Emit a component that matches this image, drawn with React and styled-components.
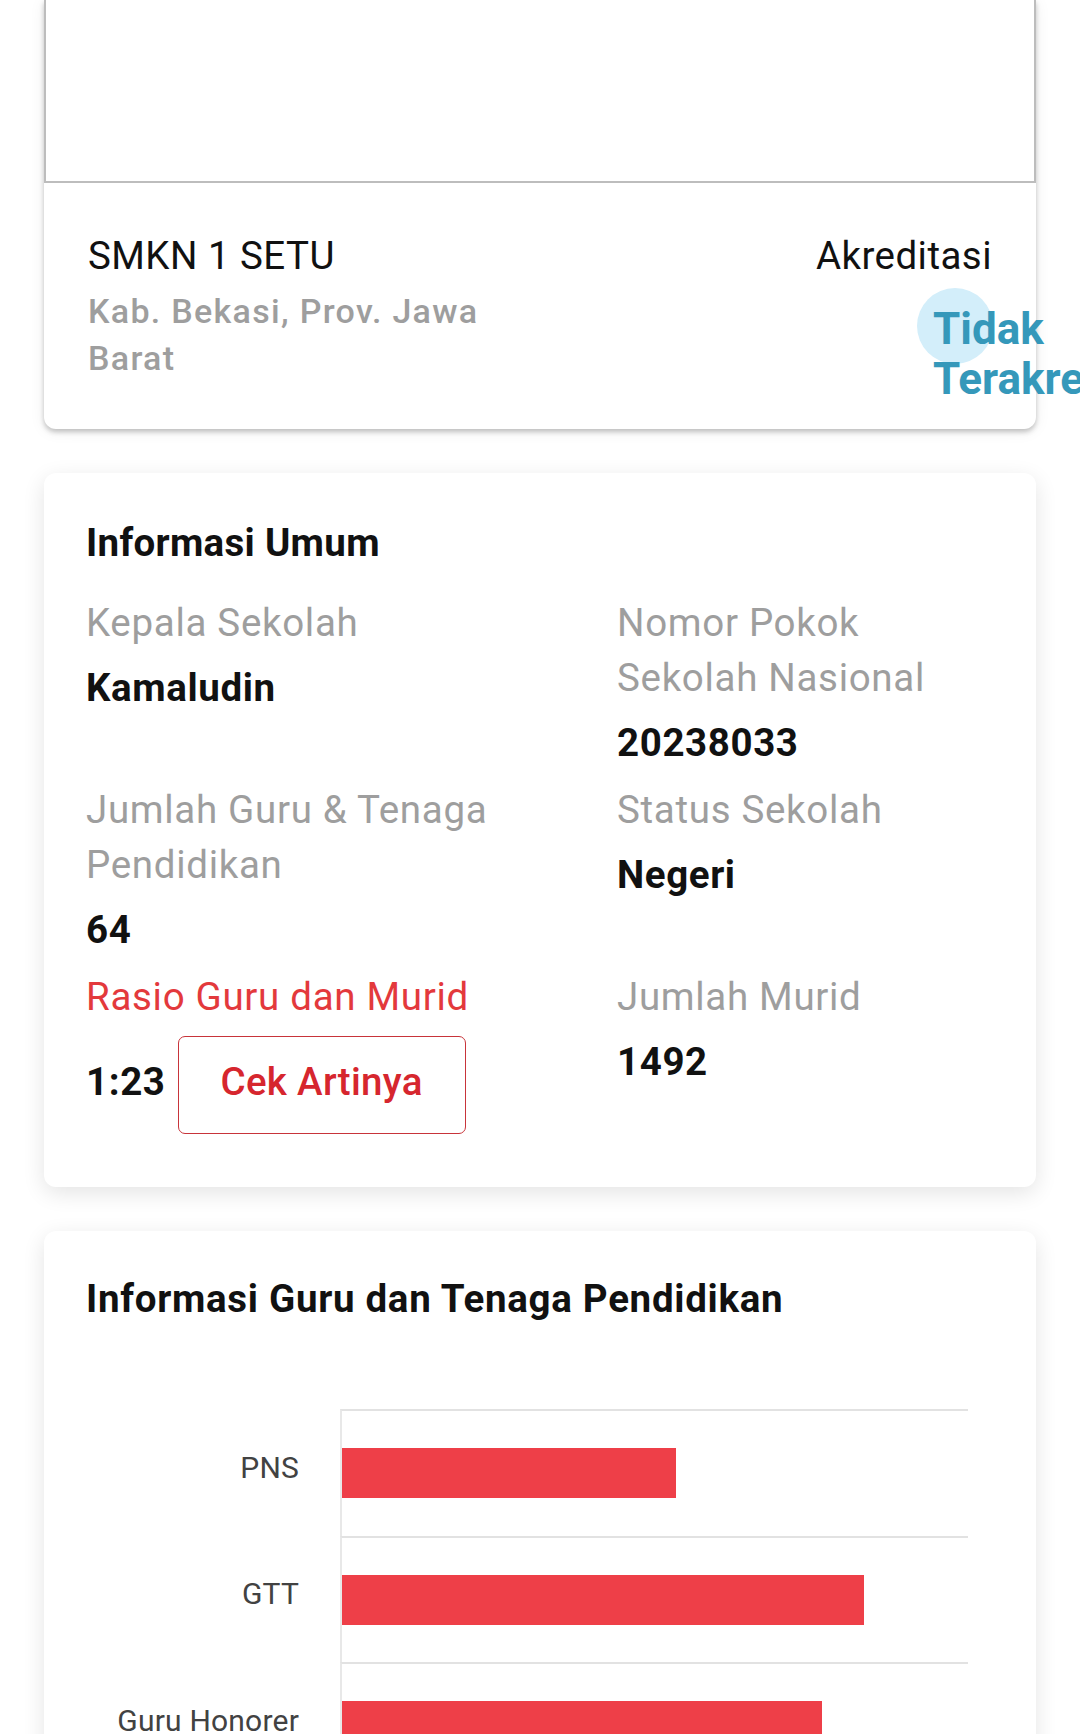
import React from "react";
import styled, { createGlobalStyle } from "styled-components";

const GlobalStyle = createGlobalStyle`
  body {
    margin: 0;
    background: #fff;
    font-family: Roboto, "Noto Sans", sans-serif;
  }
`;

const Page = styled.div`
  height: 1734px;
  overflow: hidden;
  padding: 0 44px;
  display: flex;
  flex-direction: column;
  gap: 44px;
`;

const Card = styled.section`
  flex-shrink: 0;
  background: #fff;
  border-radius: ${(p) => (p.$cutTop ? "0 0 12px 12px" : p.$cutBottom ? "12px 12px 0 0" : "12px")};
  box-shadow: ${(p) =>
    p.$raised
      ? "0 3px 5px rgba(0,0,0,0.22), 0 2px 16px rgba(0,0,0,0.07)"
      : "0 6px 22px rgba(0,0,0,0.11)"};
  padding: ${(p) => p.$pad || "42px 42px 53px"};
`;

const ImageBox = styled.div`
  height: 181px;
  border: 2px solid #bdbdbd;
  border-top: none;
`;

const Header = styled.div`
  display: flex;
  justify-content: space-between;
  padding: 45px 44px 47px;
`;

const Col = styled.div`
  flex: ${(p) => (p.$right ? "1" : "0 0 440px")};
  display: flex;
  flex-direction: column;
  align-items: ${(p) => (p.$right ? "flex-end" : "flex-start")};
`;

const SchoolName = styled.div`
  font-size: 38.5px;
  line-height: 55px;
  letter-spacing: 0.45px;
  color: #111;
`;

const Address = styled.div`
  margin-top: 5px;
  font-size: 34px;
  line-height: 47px;
  font-weight: 500;
  letter-spacing: 1.3px;
  color: #9e9e9e;
`;

const Badge = styled.div`
  position: relative;
  width: 59px;
  height: 78px;
  margin-top: 21px;
  font-size: 44px;
  line-height: 50px;
  font-weight: 700;
  color: #3598ba;
`;

const Ripple = styled.span`
  position: absolute;
  left: -16px;
  top: -16px;
  width: 76px;
  height: 76px;
  border-radius: 50%;
  background: #d3eefa;
`;

const BadgeText = styled.span`
  position: relative;
`;

const Title = styled.h2`
  margin: 0;
  font-size: 38.5px;
  line-height: 55px;
  font-weight: 700;
  letter-spacing: ${(p) => (p.$wide ? "0.7px" : "0.3px")};
  color: #111;
`;

const InfoGrid = styled.div`
  margin-top: 25px;
  display: grid;
  grid-template-columns: 531px 1fr;
  row-gap: 12px;
`;

const Field = styled.div`
  display: flex;
  flex-direction: column;
  align-items: flex-start;
`;

const Label = styled.div`
  font-size: 38.5px;
  line-height: 55px;
  letter-spacing: 0.69px;
  color: ${(p) => (p.$accent ? "#e3393c" : "#9e9e9e")};
`;

const Value = styled.div`
  margin-top: 10px;
  font-size: 38.5px;
  line-height: 55px;
  font-weight: 700;
  letter-spacing: 0.6px;
  color: #111;
`;

const RatioRow = styled.div`
  margin-top: 12px;
  display: flex;
  align-items: baseline;
  gap: 12px;
`;

const OutlineButton = styled.button`
  height: 98px;
  padding: 16px 42px 24px;
  border: 1.5px solid #c8343a;
  border-radius: 7px;
  background: #fff;
  font-family: inherit;
  font-size: 38.5px;
  line-height: 55px;
  font-weight: 500;
  letter-spacing: 0.3px;
  color: #d6262e;
`;

const Chart = styled.div`
  margin-top: 83px;
  display: grid;
  grid-template-columns: 254px 628px;
`;

const AxisLabel = styled.div`
  height: 126.5px;
  padding: 0 41px 10px 0;
  box-sizing: border-box;
  display: flex;
  align-items: center;
  justify-content: flex-end;
  font-size: 30px;
  letter-spacing: 0.2px;
  color: #424242;
  white-space: nowrap;
`;

const Band = styled.div`
  height: 126.5px;
  box-sizing: border-box;
  border-top: 2px solid #e2e2e2;
  border-left: 2px solid #e8e8e8;
  display: flex;
  align-items: center;
`;

const Bar = styled.div`
  height: 50px;
  background: #ee3f48;
`;

const staff = [
  { name: "PNS", count: 16 },
  { name: "GTT", count: 25 },
  { name: "Guru Honorer", count: 23 },
];
const axisMax = 30;

export default function App() {
  return (
    <>
      <GlobalStyle />
      <Page>
        <Card $cutTop $raised $pad="0">
          <ImageBox />
          <Header>
            <Col>
              <SchoolName>SMKN 1 SETU</SchoolName>
              <Address>Kab. Bekasi, Prov. Jawa Barat</Address>
            </Col>
            <Col $right>
              <SchoolName>Akreditasi</SchoolName>
              <Badge>
                <Ripple />
                <BadgeText>Tidak Terakreditasi</BadgeText>
              </Badge>
            </Col>
          </Header>
        </Card>

        <Card>
          <Title>Informasi Umum</Title>
          <InfoGrid>
            <Field>
              <Label>Kepala Sekolah</Label>
              <Value>Kamaludin</Value>
            </Field>
            <Field>
              <Label>Nomor Pokok Sekolah Nasional</Label>
              <Value>20238033</Value>
            </Field>
            <Field>
              <Label>Jumlah Guru &amp; Tenaga Pendidikan</Label>
              <Value>64</Value>
            </Field>
            <Field>
              <Label>Status Sekolah</Label>
              <Value>Negeri</Value>
            </Field>
            <Field>
              <Label $accent>Rasio Guru dan Murid</Label>
              <RatioRow>
                <Value as="span">1:23</Value>
                <OutlineButton type="button">Cek Artinya</OutlineButton>
              </RatioRow>
            </Field>
            <Field>
              <Label>Jumlah Murid</Label>
              <Value>1492</Value>
            </Field>
          </InfoGrid>
        </Card>

        <Card $cutBottom $pad="40px 42px 0">
          <Title $wide>Informasi Guru dan Tenaga Pendidikan</Title>
          <Chart>
            {staff.map((s) => (
              <React.Fragment key={s.name}>
                <AxisLabel>{s.name}</AxisLabel>
                <Band>
                  <Bar style={{ width: `${(s.count / axisMax) * 100}%` }} />
                </Band>
              </React.Fragment>
            ))}
          </Chart>
        </Card>
      </Page>
    </>
  );
}
